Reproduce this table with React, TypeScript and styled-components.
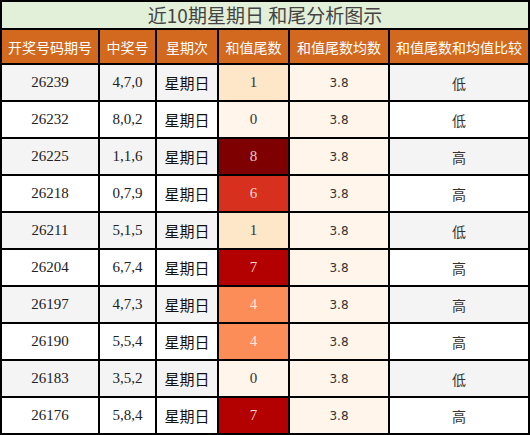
import React from "react";
import styled, { createGlobalStyle } from "styled-components";

const Global = createGlobalStyle`
  html, body { margin: 0; padding: 0; background: #fff; }
  body { font-family: "Noto Sans CJK SC", "Noto Sans", sans-serif; }
`;

const Table = styled.table`
  width: 530px;
  table-layout: fixed;
  border-collapse: separate;
  border-spacing: 2px;
  background: #000;
`;

const Col = styled.col<{ $w: number }>`
  width: ${(p) => p.$w}px;
`;

const TitleCell = styled.th`
  height: 26px;
  padding: 0;
  background: #e2efd9;
  color: #444;
  font-family: "Noto Sans CJK SC", sans-serif;
  font-weight: normal;
  font-size: 19px;
  line-height: 26px;
  text-align: center;
`;

const HeadCell = styled.th`
  height: 33px;
  padding: 0;
  background: #d2691e;
  color: #fff;
  font-family: "Noto Sans CJK SC", sans-serif;
  font-weight: normal;
  font-size: 14px;
  text-align: center;
  white-space: nowrap;
`;

const Cell = styled.td<{ $stripe?: boolean }>`
  height: 35px;
  padding: 0;
  text-align: center;
  background: ${(p) => (p.$stripe ? "#f4f4f4" : "#fff")};
  color: #222;
`;

const NumCell = styled(Cell)`
  font-family: "Liberation Serif", serif;
  font-size: 15px;
`;

const CjkCell = styled(Cell)`
  font-family: "Noto Sans CJK SC", sans-serif;
  font-size: 15px;
  color: #111;
`;

const CmpCell = styled(Cell)`
  font-family: "Noto Sans CJK SC", sans-serif;
  font-size: 14px;
  color: #333;
`;

const HeatCell = styled.td<{ $bg: string; $light: boolean }>`
  height: 35px;
  padding: 0;
  text-align: center;
  background: ${(p) => p.$bg};
  color: ${(p) => (p.$light ? "rgba(255,255,255,0.82)" : "#333")};
  font-family: "Liberation Serif", serif;
  font-size: 15px;
`;

const AvgCell = styled.td`
  height: 35px;
  padding: 0;
  text-align: center;
  background: #fff5eb;
  color: #333;
  font-family: "DejaVu Sans", sans-serif;
  font-size: 12px;
`;

const heat: Record<number, string> = {
  0: "#fff5eb",
  1: "#fee6c8",
  2: "#fdd49e",
  3: "#fdbb84",
  4: "#fc8d59",
  5: "#ef6548",
  6: "#d7301f",
  7: "#b30000",
  8: "#7f0000",
  9: "#67000d",
};

const rows = [
  ["26239", "4,7,0", 1, "低"],
  ["26232", "8,0,2", 0, "低"],
  ["26225", "1,1,6", 8, "高"],
  ["26218", "0,7,9", 6, "高"],
  ["26211", "5,1,5", 1, "低"],
  ["26204", "6,7,4", 7, "高"],
  ["26197", "4,7,3", 4, "高"],
  ["26190", "5,5,4", 4, "高"],
  ["26183", "3,5,2", 0, "低"],
  ["26176", "5,8,4", 7, "高"],
] as const;

const heads: [string, number][] = [
  ["开奖号码期号", 96],
  ["中奖号", 55],
  ["星期次", 60],
  ["和值尾数", 69],
  ["和值尾数均数", 98],
  ["和值尾数和均值比较", 138],
];

export default function App() {
  return (
    <>
      <Global />
      <Table>
        <colgroup>
          {heads.map(([t, w]) => (
            <Col key={t} $w={w} />
          ))}
        </colgroup>
        <thead>
          <tr>
            <TitleCell colSpan={6}>近10期星期日 和尾分析图示</TitleCell>
          </tr>
          <tr>
            {heads.map(([t]) => (
              <HeadCell key={t}>{t}</HeadCell>
            ))}
          </tr>
        </thead>
        <tbody>
          {rows.map(([issue, nums, tail, cmp], i) => {
            const stripe = i % 2 === 0;
            return (
              <tr key={issue}>
                <NumCell $stripe={stripe}>{issue}</NumCell>
                <NumCell $stripe={stripe}>{nums}</NumCell>
                <CjkCell $stripe={stripe}>星期日</CjkCell>
                <HeatCell $bg={heat[tail]} $light={tail >= 4}>
                  {tail}
                </HeatCell>
                <AvgCell>3.8</AvgCell>
                <CmpCell $stripe={stripe}>{cmp}</CmpCell>
              </tr>
            );
          })}
        </tbody>
      </Table>
    </>
  );
}
